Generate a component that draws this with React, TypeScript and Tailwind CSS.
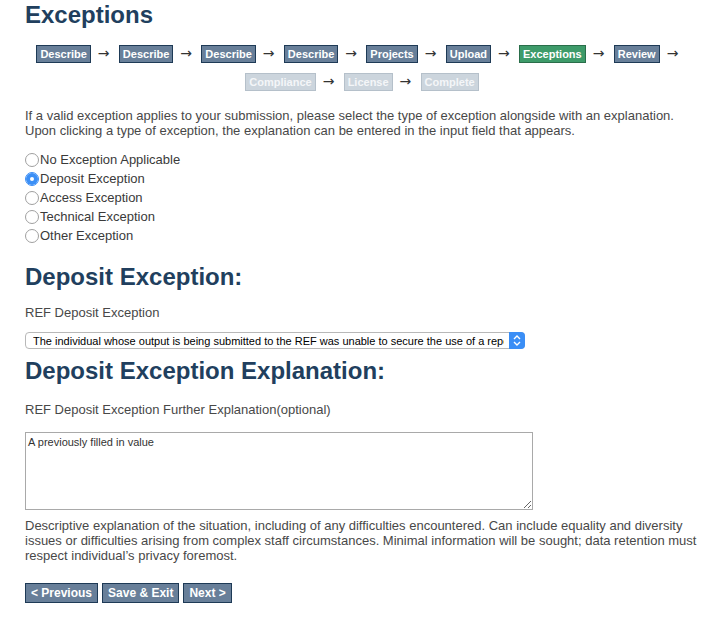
import { useState } from 'react';

const steps = [
    { name: 'Describe', state: 'done' },
    { name: 'Describe', state: 'done' },
    { name: 'Describe', state: 'done' },
    { name: 'Describe', state: 'done' },
    { name: 'Projects', state: 'done' },
    { name: 'Upload', state: 'done' },
    { name: 'Exceptions', state: 'current' },
    { name: 'Review', state: 'done' },
    { name: 'Compliance', state: 'todo' },
    { name: 'License', state: 'todo' },
    { name: 'Complete', state: 'todo' },
];

const exceptions = [
    'No Exception Applicable',
    'Deposit Exception',
    'Access Exception',
    'Technical Exception',
    'Other Exception',
];

function StepBox({ name, state }: { name: string; state: string }) {
    let cls = 'bg-[#687f99] border-[#1e3a56] text-white';
    if (state === 'current') cls = 'bg-[#3e9b6a] border-[#2a6e4a] text-white';
    if (state === 'todo') cls = 'bg-[#ccd5dd] border-[#b5c0ca] text-[#f4f6f8]';
    return (
        <span className={'border px-[3px] h-[18px] text-[11px] leading-[16px] font-bold ' + cls}>
            {name}
        </span>
    );
}

function App() {

    const [choice, setChoice] = useState('Deposit Exception');

    return (
        <div className="font-['Liberation_Sans',Arial,sans-serif] bg-white min-h-[638px] pl-[25px] pr-[2px] text-[#484848]">

            <h1 className="pt-px text-[24px] leading-[28px] font-bold text-[#213f5e]">Exceptions</h1>

            {/* barra de passos */}
            <div className="mt-[16px] mr-[2px] flex flex-wrap justify-center gap-y-[10px]">
                {steps.map((s, i) => (
                    <div key={i} className="flex items-start">
                        <StepBox name={s.name} state={s.state} />
                        {i < steps.length - 1 && (
                            <span className="ml-[7px] mr-[8px] w-[13px] font-['DejaVu_Sans',sans-serif] text-[14px] leading-[16px] text-[#333]">→</span>
                        )}
                    </div>
                ))}
            </div>

            <p className="mt-[17px] text-[13px] leading-[15px] whitespace-nowrap">
                If a valid exception applies to your submission, please select the type of exception alongside with an explanation.
                <br />
                Upon clicking a type of exception, the explanation can be entered in the input field that appears.
            </p>

            {/* opcions */}
            <div className="mt-[12px] flex flex-col">
                {exceptions.map((e) => (
                    <label key={e} className="flex items-center h-[19px] text-[13px] text-[#3a3a3a] cursor-pointer">
                        <input
                            type="radio"
                            name="exception"
                            checked={choice === e}
                            onChange={() => setChoice(e)}
                            className="appearance-none w-[14px] h-[14px] rounded-full border border-[#a0a0a0] bg-white mr-[1px] checked:border-[#3a8ef6] checked:shadow-[inset_0_0_0_4px_#3b8ff6]"
                        />
                        {e}
                    </label>
                ))}
            </div>

            <h2 className="mt-[18px] text-[24px] leading-[28px] font-bold text-[#213f5e]">Deposit Exception:</h2>

            <div className="mt-[14px] text-[13px] leading-[15px]">REF Deposit Exception</div>

            <div className="relative mt-[12px] w-[500px] h-[17px]">
                <select className="block appearance-none w-full h-[17px] border border-[#b8b8b8] rounded-[4px] bg-white pl-[7px] pr-[20px] py-0 text-[11px] text-black outline-none">
                    <option>The individual whose output is being submitted to the REF was unable to secure the use of a repository at the point of acceptance</option>
                </select>
                <span className="absolute right-0 top-0 w-[16px] h-[17px] rounded-r-[4px] bg-[#3a8ef6] flex items-center justify-center pointer-events-none">
                    <svg width="8" height="11" viewBox="0 0 8 11" fill="none" stroke="white" strokeWidth="1.4">
                        <path d="M1 4 L4 1 L7 4" />
                        <path d="M1 7 L4 10 L7 7" />
                    </svg>
                </span>
            </div>

            <h2 className="mt-[8px] text-[24px] leading-[28px] font-bold text-[#213f5e]">Deposit Exception Explanation:</h2>

            <div className="mt-[17px] text-[13px] leading-[15px]">REF Deposit Exception Further Explanation(optional)</div>

            <textarea
                defaultValue="A previously filled in value"
                className="block mt-[15px] w-[508px] h-[78px] border border-[#a9a9a9] px-[2px] py-[3px] text-[11px] leading-[13px] text-[#333] outline-none"
            />

            <p className="mt-[8px] text-[13px] leading-[15px] whitespace-nowrap">
                Descriptive explanation of the situation, including of any difficulties encountered. Can include equality and diversity
                <br />
                issues or difficulties arising from complex staff circumstances. Minimal information will be sought; data retention must
                <br />
                respect individual’s privacy foremost.
            </p>

            {/* botons */}
            <div className="mt-[20px] flex gap-[4px]">
                <button className="h-[20px] border border-[#1e3a56] bg-[#687f99] px-[5px] text-[12px] font-bold text-white cursor-pointer">&lt; Previous</button>
                <button className="h-[20px] border border-[#1e3a56] bg-[#687f99] px-[5px] text-[12px] font-bold text-white cursor-pointer">Save &amp; Exit</button>
                <button className="h-[20px] border border-[#1e3a56] bg-[#687f99] px-[5px] text-[12px] font-bold text-white cursor-pointer">Next &gt;</button>
            </div>

        </div>
    );
}

export default App;
